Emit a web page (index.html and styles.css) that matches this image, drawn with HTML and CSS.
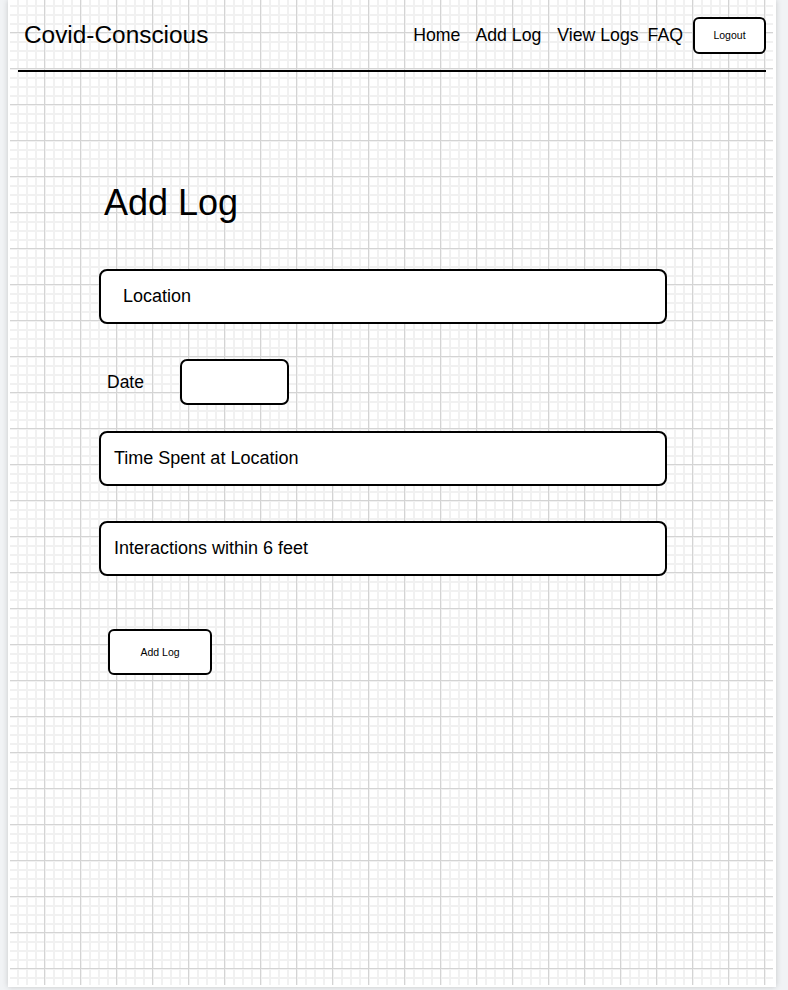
FILE: index.html
```html
<!DOCTYPE html>
<html lang="en">
<head>
<meta charset="utf-8">
<title>Covid-Conscious - Add Log</title>
<link rel="stylesheet" href="styles.css">
</head>
<body>
<div class="page">
  <div class="grid">
    <header class="header">
      <div class="brand">Covid-Conscious</div>
      <nav class="nav">
        <span class="nav-link nav-home">Home</span>
        <span class="nav-link nav-add">Add Log</span>
        <span class="nav-link nav-view">View Logs</span>
        <span class="nav-link nav-faq">FAQ</span>
        <div class="btn btn-logout">Logout</div>
      </nav>
    </header>
    <main class="main">
      <h1 class="title">Add Log</h1>
      <div class="field field-location">Location</div>
      <div class="date-row">
        <span class="date-label">Date</span>
        <div class="date-box"></div>
      </div>
      <div class="field field-time">Time Spent at Location</div>
      <div class="field field-inter">Interactions within 6 feet</div>
      <div class="btn btn-add">Add Log</div>
    </main>
  </div>
</div>
</body>
</html>
```

FILE: styles.css
```css
html, body {
  margin: 0;
  padding: 0;
}
body {
  background: #f1f3f5;
  font-family: "Liberation Sans", Arial, sans-serif;
  color: #000;
  width: 788px;
  height: 990px;
  overflow: hidden;
}
.page {
  margin-left: 8px;
  width: 768px;
  height: 987px;
  background: #fff;
  box-shadow: 0 0 6px rgba(0, 0, 0, 0.18);
  overflow: hidden;
}
.grid {
  margin: 0 3px 0 2px;
  height: 985px;
  background-color: #fff;
  background-image:
    linear-gradient(to right, #d4d4d4 1px, transparent 1px),
    linear-gradient(to bottom, #d4d4d4 1px, transparent 1px),
    linear-gradient(to right, #f1f1f1 2px, transparent 2px),
    linear-gradient(to bottom, #f1f1f1 2px, transparent 2px);
  background-size: 36px 36px, 36px 36px, 9px 9px, 9px 9px;
  background-position: 34px 32px, 34px 32px, 34px 32px, 34px 32px;
  overflow: hidden;
}
.header {
  margin-left: 8px;
  width: 748px;
  height: 70px;
  border-bottom: 2px solid #000;
  display: flex;
  align-items: center;
  justify-content: space-between;
}
.brand {
  font-size: 24.4px;
  line-height: 28px;
  padding-left: 6px;
}
.nav {
  display: flex;
  align-items: center;
  font-size: 17.7px;
  line-height: 20px;
}
.nav-home { margin-right: 15px; }
.nav-add { margin-right: 16px; }
.nav-view { margin-right: 9px; }
.nav-faq { margin-right: 10px; }
.btn {
  box-sizing: border-box;
  border: 2px solid #000;
  border-radius: 6px;
  background: #fff;
  display: flex;
  align-items: center;
  justify-content: center;
  font-size: 10.5px;
}
.btn-logout {
  width: 73px;
  height: 37px;
}
.main {
  padding: 113px 0 0 89px;
  display: flex;
  flex-direction: column;
  align-items: flex-start;
}
.title {
  margin: 0 0 48px 5px;
  font-weight: normal;
  font-size: 36px;
  line-height: 36px;
}
.field {
  box-sizing: border-box;
  width: 568px;
  height: 55px;
  border: 2px solid #000;
  border-radius: 8px;
  background: #fff;
  display: flex;
  align-items: center;
  font-size: 18px;
  padding-left: 13px;
}
.field-location {
  padding-left: 22px;
}
.date-row {
  display: flex;
  align-items: center;
  margin: 35px 0 26px 8px;
}
.date-label {
  font-size: 17.5px;
  width: 73px;
}
.date-box {
  box-sizing: border-box;
  width: 109px;
  height: 46px;
  border: 2px solid #000;
  border-radius: 7px;
  background: #fff;
}
.field-inter {
  margin-top: 35px;
}
.btn-add {
  margin: 53px 0 0 9px;
  width: 104px;
  height: 46px;
}
```
